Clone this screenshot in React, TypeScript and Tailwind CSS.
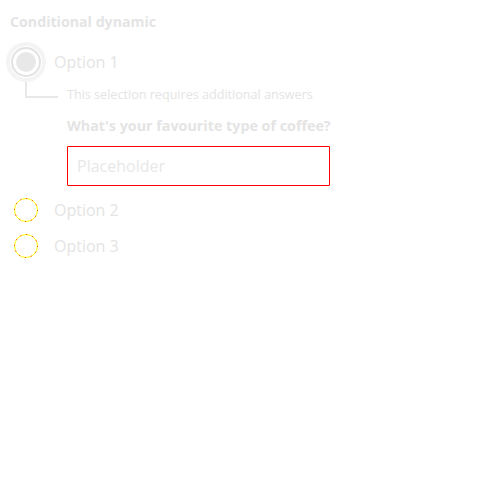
const SelectedRadio = () => (
  <svg width="40" height="40" viewBox="0 0 40 40">
    <circle cx="20" cy="20" r="20" fill="#f4f4f4" />
    <circle cx="20" cy="20" r="16" fill="#ffffff" />
    <circle cx="20" cy="20" r="14" fill="none" stroke="#e2e2e2" strokeWidth="2" />
    <circle cx="20" cy="20" r="10" fill="#e8e8e8" />
  </svg>
);

const EmptyRadio = () => (
  <svg width="24" height="24" viewBox="0 0 24 24">
    <circle cx="12" cy="12" r="11.5" fill="none" stroke="#ffff00" strokeWidth="1" />
    <circle cx="12" cy="12" r="11.5" fill="none" stroke="#ff0000" strokeWidth="1" strokeDasharray="1 5" />
  </svg>
);

const App = () => {
  return (
    <div className="min-h-screen bg-white p-[10px] font-['Open_Sans',sans-serif] text-[#e4e4e4]">
      {/* Title */}
      <div className="text-[14.2px] leading-6 font-bold">Conditional dynamic</div>

      {/* Option 1 (selected) */}
      <div className="mt-[8px] -ml-1 flex h-10 items-center gap-2">
        <SelectedRadio />
        <span className="text-base">Option 1</span>
      </div>

      {/* Conditional content */}
      <div className="flex">
        <div className="ml-[15px] h-[16px] w-[33px] border-b-2 border-l-2 border-[#e8e8e8]" />
        <div className="ml-[9px]">
          <p className="mt-[5px] text-[12.6px] leading-4">This selection requires additional answers</p>
          <p className="mt-[13px] text-[14.3px] leading-5 font-bold">What&apos;s your favourite type of coffee?</p>
          <div className="mt-[10px] h-10 w-[263px] bg-[#ffff00]">
            <input
              type="text"
              placeholder="Placeholder"
              className="h-full w-full rounded-[1px] border border-[#ff0000] bg-white pl-[9px] text-base text-[#e4e4e4] outline-none placeholder:text-[#e8e8e8]"
            />
          </div>
        </div>
      </div>

      {/* Option 2 */}
      <div className="mt-[6px] -ml-1 flex h-9 items-center gap-2">
        <div className="flex w-10 justify-center">
          <EmptyRadio />
        </div>
        <span className="text-base">Option 2</span>
      </div>

      {/* Option 3 */}
      <div className="-ml-1 flex h-9 items-center gap-2">
        <div className="flex w-10 justify-center">
          <EmptyRadio />
        </div>
        <span className="text-base">Option 3</span>
      </div>
    </div>
  );
};

export default App;
